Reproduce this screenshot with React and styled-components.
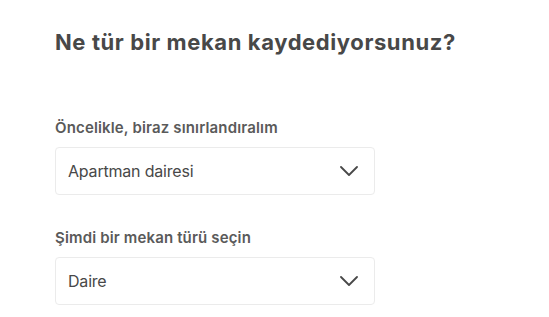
import React from 'react';
import styled, { createGlobalStyle } from 'styled-components';

const GlobalStyle = createGlobalStyle`
    html, body {
        margin: 0;
        padding: 0;
        background: #ffffff;
    }
    body {
        font-family: Inter, "Noto Sans", "Liberation Sans", sans-serif;
        color: #484848;
    }
`

const Page = styled.div`
    padding: 28px 0 0 55px;
    width: 320px;
`

const Title = styled.h1`
    margin: 0 0 62px;
    font-size: 22px;
    line-height: 28px;
    font-weight: 700;
    letter-spacing: 0.6px;
    color: #484848;
    white-space: nowrap;
`

const Field = styled.div`
    display: flex;
    flex-direction: column;
    gap: 9px;
    margin-bottom: ${props => props.spacing || 0}px;
`

const Label = styled.label`
    font-size: 15px;
    line-height: 20px;
    font-weight: 600;
    letter-spacing: 0.15px;
    color: #5a5a5a;
    white-space: nowrap;
`

const SelectBox = styled.div`
    box-sizing: border-box;
    height: 48px;
    display: flex;
    align-items: center;
    justify-content: space-between;
    padding: 0 16px 0 12px;
    border: 1px solid #ebebeb;
    border-radius: 4px;
    background: #ffffff;
`

const Value = styled.span`
    font-size: 16px;
    font-weight: 400;
    letter-spacing: -0.2px;
    color: #484848;
`

const Chevron = () => (
    <svg width="18" height="10" viewBox="0 0 18 10" fill="none">
        <path d="M1 1 L9 9 L17 1" stroke="#484848" strokeWidth="1.8" strokeLinecap="round" strokeLinejoin="round" />
    </svg>
)

const Select = ({ value }) => (
    <SelectBox>
        <Value>{value}</Value>
        <Chevron />
    </SelectBox>
)

const App = () => (
    <Page>
        <GlobalStyle />
        <Title>Ne tür bir mekan kaydediyorsunuz?</Title>
        <Field spacing={33}>
            <Label>Öncelikle, biraz sınırlandıralım</Label>
            <Select value="Apartman dairesi" />
        </Field>
        <Field>
            <Label>Şimdi bir mekan türü seçin</Label>
            <Select value="Daire" />
        </Field>
    </Page>
)

export default App
